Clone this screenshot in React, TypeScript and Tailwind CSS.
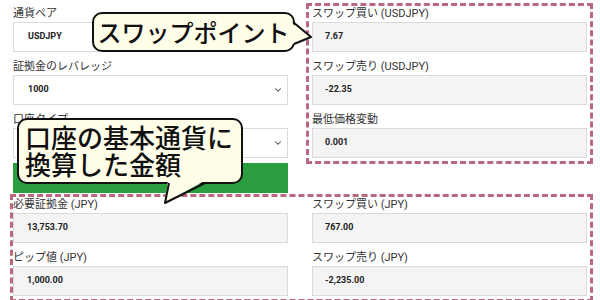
import React from "react";
import { ChevronDown } from "lucide-react";

const font = "font-['Roboto','Noto_Sans_CJK_JP',sans-serif]";

function Field({
  label,
  value,
  white,
  select,
  first,
  pad = "pl-[14px]",
}: {
  label: string;
  value: string;
  white?: boolean;
  select?: boolean;
  first?: boolean;
  pad?: string;
}) {
  return (
    <div className={first ? "" : "mt-[7px]"}>
      <div className="h-[16px] leading-[16px] text-[11px] text-[#333] whitespace-nowrap">{label}</div>
      <div
        className={`h-[30px] border border-[#dadada] flex items-center justify-between pr-[4px] ${pad} ${
          white ? "bg-white" : "bg-[#f4f4f4]"
        }`}
      >
        <span className="text-[9px] font-bold text-[#222]">{value}</span>
        {select && <ChevronDown size={10} strokeWidth={2.5} className="text-[#444]" />}
      </div>
    </div>
  );
}

export default function App() {
  return (
    <div className={`w-[600px] h-[300px] relative overflow-hidden bg-white ${font}`}>
      <div className="flex items-start pt-[3px]">
        <div className="ml-[13px] w-[275px] pt-[3px] flex flex-col">
          <Field first label="通貨ペア" value="USDJPY" white />
          <Field label="証拠金のレバレッジ" value="1000" white select />
          <Field label="口座タイプ" value="Standard" white select />
          <div className="mt-[5px] h-[30px] bg-[#2b9f3f] flex items-center justify-center">
            <span className="text-white text-[13px] font-bold">計算する</span>
          </div>
        </div>
        <div className="ml-[18px] w-[287px] border-[3px] border-dashed border-[#b8687f] px-[3px] pb-[3px]">
          <Field first label="スワップ買い (USDJPY)" value="7.67" pad="pl-[12px]" />
          <Field label="スワップ売り (USDJPY)" value="-22.35" pad="pl-[12px]" />
          <Field label="最低価格変動" value="0.001" pad="pl-[12px]" />
        </div>
      </div>

      <div className="mt-[1px] ml-[10px] w-[583px] border-[3px] border-dashed border-[#b8687f] pr-[3px] pb-[3px]">
        <div className="grid grid-cols-[275px_275px] gap-x-[24px]">
          <div>
            <Field first label="必要証拠金 (JPY)" value="13,753.70" pad="pl-[13px]" />
            <Field label="ピップ値 (JPY)" value="1,000.00" pad="pl-[13px]" />
          </div>
          <div>
            <Field first label="スワップ買い (JPY)" value="767.00" pad="pl-[12px]" />
            <Field label="スワップ売り (JPY)" value="-2,235.00" pad="pl-[12px]" />
          </div>
        </div>
      </div>

      {/* callout 1 */}
      <div className="absolute left-[92px] top-[12px] w-[203px] h-[40px] rounded-[10px] border-2 border-[#111] bg-[#fffee9] flex items-center justify-center">
        <span className="text-[24px] leading-none font-medium text-[#111] font-['Noto_Sans_CJK_JP',sans-serif] whitespace-nowrap">
          スワップポイント
        </span>
      </div>
      {/* callout 2 */}
      <div className="absolute left-[17px] top-[118px] w-[226px] h-[66px] rounded-[10px] border-2 border-[#111] bg-[#fffee9] pl-[6px] pt-[3px]">
        <div className="text-[26px] leading-[27px] font-medium text-[#111] font-['Noto_Sans_CJK_JP',sans-serif] whitespace-nowrap">
          口座の基本通貨に
          <br />
          換算した金額
        </div>
      </div>
      <svg className="absolute left-0 top-0" width="600" height="300" viewBox="0 0 600 300">
        <polygon points="290,22 311,37 290,45" fill="#fffee9" />
        <polyline points="293,22 311,37 294,44" fill="none" stroke="#111" strokeWidth="2" strokeLinejoin="round" />
        <polygon points="168,180 206,180 165,203" fill="#fffee9" />
        <polyline points="169,183 165,203 205,183" fill="none" stroke="#111" strokeWidth="2" strokeLinejoin="round" />
      </svg>
    </div>
  );
}
